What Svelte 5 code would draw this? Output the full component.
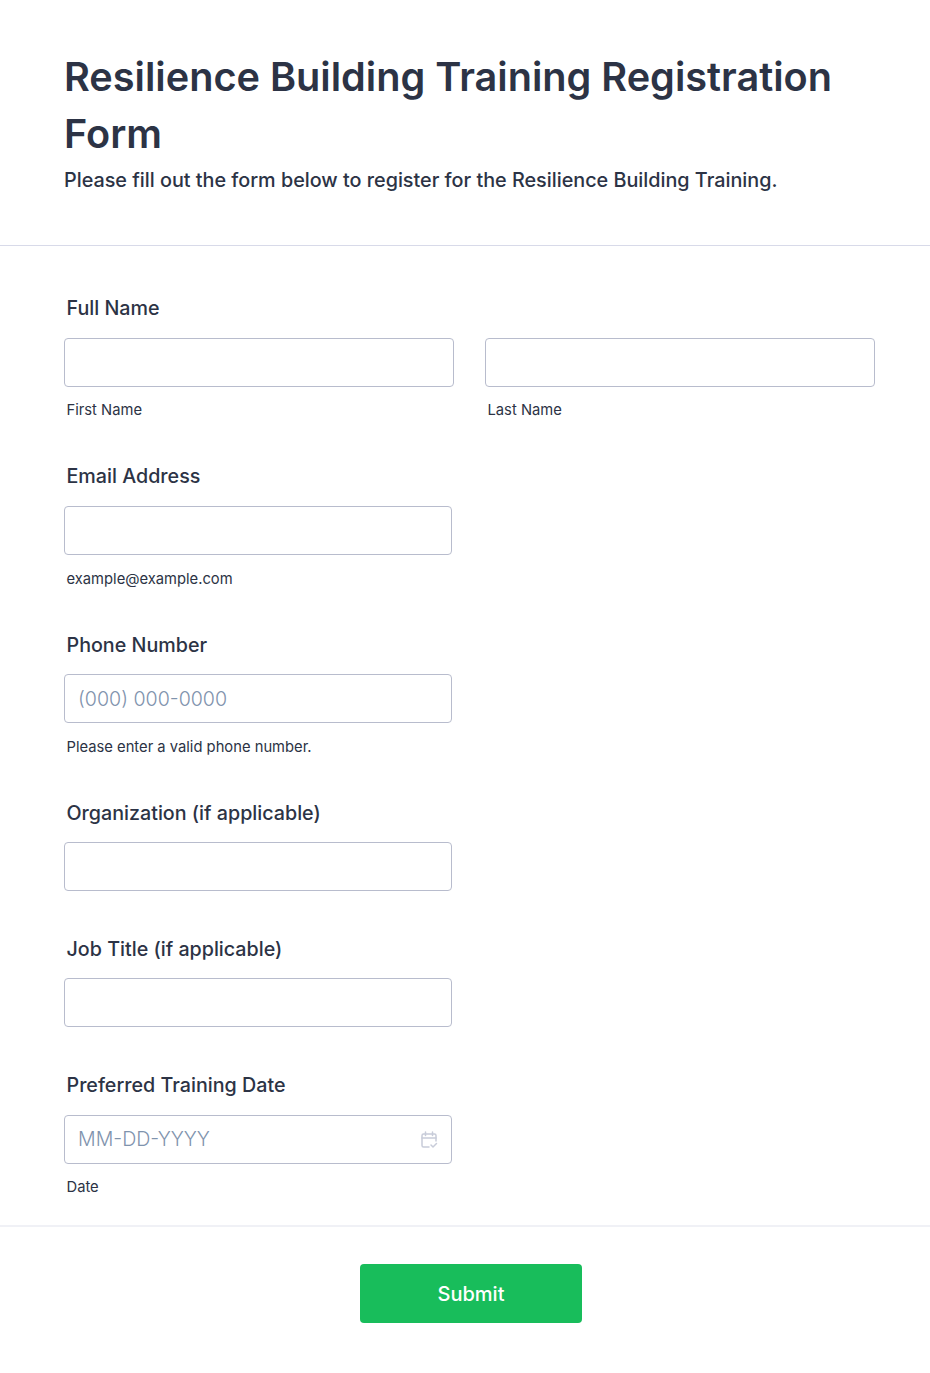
<script>
  const fields = [
    { label: "Email Address", hint: "example@example.com" },
    { label: "Phone Number", placeholder: "(000) 000-0000", hint: "Please enter a valid phone number." },
    { label: "Organization (if applicable)" },
    { label: "Job Title (if applicable)" },
  ];
</script>

<div class="page">
  <header class="head">
    <h1>Resilience Building Training Registration Form</h1>
    <p>Please fill out the form below to register for the Resilience Building Training.</p>
  </header>

  <form class="body">
    <div class="field first">
      <label for="first">Full Name</label>
      <div class="name-row">
        <div class="name-col">
          <input id="first" type="text" />
          <span class="hint">First Name</span>
        </div>
        <div class="name-col">
          <input id="last" type="text" />
          <span class="hint">Last Name</span>
        </div>
      </div>
    </div>

    {#each fields as f}
      <div class="field" class:has-hint={f.hint}>
        <label for={f.label}>{f.label}</label>
        <input class="single" id={f.label} type="text" placeholder={f.placeholder ?? ""} />
        {#if f.hint}<span class="hint">{f.hint}</span>{/if}
      </div>
    {/each}

    <div class="field date">
      <label for="date">Preferred Training Date</label>
      <div class="date-wrap">
        <input class="single" id="date" type="text" placeholder="MM-DD-YYYY" />
        <svg class="cal" width="18" height="18" viewBox="0 0 18 18" fill="none" stroke="#c8ccd9" stroke-width="1.500" stroke-linecap="round" stroke-linejoin="round">
          <path d="M9 16H3.500A1.500 1.500 0 0 1 2 14.500V4.500A1.500 1.500 0 0 1 3.500 3H14.500A1.500 1.500 0 0 1 16 4.500V10" />
          <path d="M2 7H16M5.500 1V4.500M12.500 1V4.500" />
          <path d="M11 14L13 16L16.500 12.500" />
        </svg>
      </div>
      <span class="hint">Date</span>
    </div>
  </form>

  <footer class="foot">
    <button type="button">Submit</button>
  </footer>
</div>

<style>
  :global(body) {
    margin: 0;
    background: #fff;
  }

  .page {
    font-family: Inter, "Liberation Sans", sans-serif;
    color: #2c3345;
    height: 1373px;
  }

  .head {
    padding: 49px 64px 0;
    height: 196px;
    border-bottom: 1px solid #d8dae9;
  }

  h1 {
    margin: 0;
    font-size: 39.650px;
    line-height: 57px;
    font-weight: 600;
  }

  .head p {
    margin: 2px 0 0;
    font-size: 19.780px;
    line-height: 30px;
    font-weight: 500;
  }

  .body {
    padding: 49.500px 55px 0 64px;
    height: 981px;
    border-bottom: 2px solid #f0f1f6;
    box-sizing: border-box;
    display: flex;
    flex-direction: column;
  }

  .field {
    display: flex;
    flex-direction: column;
    margin-bottom: 46px;
  }

  .field.first {
    margin-bottom: 45px;
  }

  .field.has-hint {
    margin-bottom: 44.850px;
  }

  label {
    font-size: 19.700px;
    line-height: 24px;
    font-weight: 500;
    margin: 0 0 17px 2.500px;
  }

  .first label {
    margin-bottom: 18px;
  }

  .has-hint label {
    margin-bottom: 17.500px;
  }

  .date label {
    margin-bottom: 17.600px;
  }

  input {
    box-sizing: border-box;
    display: block;
    width: 100%;
    height: 49px;
    border: 1px solid #b8bccd;
    border-radius: 4px;
    background: #fff;
    padding: 1px 13px 0;
    font: 300 19.600px Inter, "Liberation Sans", sans-serif;
    color: #2c3345;
    outline: none;
  }

  .date input {
    padding-top: 0;
  }

  input::placeholder {
    color: #7f93ad;
    opacity: 1;
  }

  .single {
    width: 388px;
  }

  .name-row {
    display: grid;
    grid-template-columns: 390px 390px;
    gap: 31px;
  }

  .hint {
    display: block;
    font-size: 14.750px;
    line-height: 18px;
    margin: 14.500px 0 0 2.500px;
    color: #2c3345;
  }

  .has-hint .hint {
    margin-top: 15.200px;
  }

  .date-wrap {
    position: relative;
    width: 388px;
  }

  .cal {
    position: absolute;
    right: 14px;
    top: 16px;
  }

  .foot {
    display: flex;
    justify-content: center;
    padding: 37px 0 0 12px;
  }

  button {
    width: 222px;
    height: 59px;
    border: none;
    border-radius: 4px;
    background: #18bd5b;
    color: #fff;
    font: 500 20px Inter, "Liberation Sans", sans-serif;
  }
</style>
